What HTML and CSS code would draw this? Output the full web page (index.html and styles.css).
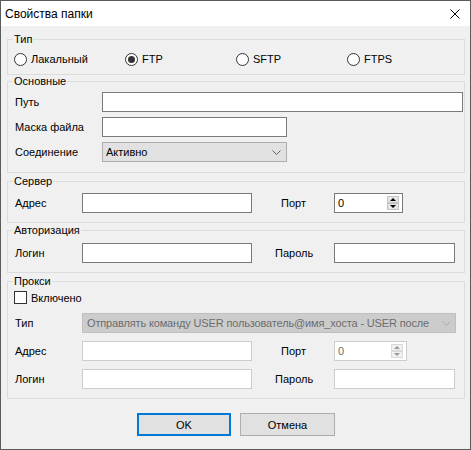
FILE: index.html
```html
<!DOCTYPE html>
<html lang="ru">
<head>
  <meta charset="UTF-8">
  <title>Свойства папки</title>
  <link rel="stylesheet" href="styles.css">
</head>
<body>

  <div class="window">
    <div class="titlebar">
      <span class="title">Свойства папки</span>
      <svg class="close" width="10" height="10" viewBox="0 0 10 10">
        <path d="M0.5 0.5 L9.5 9.5 M9.5 0.5 L0.5 9.5" stroke="#000" stroke-width="1" fill="none"/>
      </svg>
    </div>

    <div class="client">

      <fieldset class="group g-type">
        <legend>Тип</legend>
        <div class="radios">
          <label class="radio"><span class="dot"></span>Лакальный</label>
          <label class="radio"><span class="dot checked"></span>FTP</label>
          <label class="radio"><span class="dot"></span>SFTP</label>
          <label class="radio"><span class="dot"></span>FTPS</label>
        </div>
      </fieldset>

      <fieldset class="group g-main">
        <legend>Основные</legend>
        <div class="form-main">
          <span class="lbl">Путь</span>
          <div class="edit edit-path"></div>
          <span class="lbl">Маска файла</span>
          <div class="edit edit-mask"></div>
          <span class="lbl">Соединение</span>
          <div class="combo combo-mask">
            <span class="combo-text">Активно</span>
            <svg class="chev" width="9" height="5" viewBox="0 0 9 5"><path d="M0.5 0.5 L4.5 4.5 L8.5 0.5" stroke="#606060" fill="none"/></svg>
          </div>
        </div>
      </fieldset>

      <fieldset class="group g-server">
        <legend>Сервер</legend>
        <div class="form-pair">
          <span class="lbl">Адрес</span>
          <div class="edit edit-wide"></div>
          <span class="lbl lbl-port">Порт</span>
          <div class="spin">
            <span>0</span>
            <span class="spin-btns">
              <span class="spin-btn"><svg width="6" height="3" viewBox="0 0 6 3"><path d="M0 3 L3 0 L6 3 Z" fill="#000"/></svg></span>
              <span class="spin-btn"><svg width="6" height="3" viewBox="0 0 6 3"><path d="M0 0 L3 3 L6 0 Z" fill="#000"/></svg></span>
            </span>
          </div>
        </div>
      </fieldset>

      <fieldset class="group g-auth">
        <legend>Авторизация</legend>
        <div class="form-pair">
          <span class="lbl">Логин</span>
          <div class="edit edit-wide"></div>
          <span class="lbl lbl-pass">Пароль</span>
          <div class="edit edit-pass"></div>
        </div>
      </fieldset>

      <fieldset class="group g-proxy">
        <legend>Прокси</legend>
        <label class="check"><span class="box"></span>Включено</label>
        <div class="form-pair proxy-rows">
          <span class="lbl">Тип</span>
          <div class="combo combo-off span-all">
            <span class="combo-text">Отправлять команду USER пользователь@имя_хоста - USER после</span>
            <svg class="chev" width="9" height="5" viewBox="0 0 9 5"><path d="M0.5 0.5 L4.5 4.5 L8.5 0.5" stroke="#a8a8a8" fill="none"/></svg>
          </div>
          <span class="lbl">Адрес</span>
          <div class="edit edit-wide off"></div>
          <span class="lbl lbl-port">Порт</span>
          <div class="spin spin-off">
            <span>0</span>
            <span class="spin-btns">
              <span class="spin-btn"><svg width="6" height="3" viewBox="0 0 6 3"><path d="M0 3 L3 0 L6 3 Z" fill="#9a9a9a"/></svg></span>
              <span class="spin-btn"><svg width="6" height="3" viewBox="0 0 6 3"><path d="M0 0 L3 3 L6 0 Z" fill="#9a9a9a"/></svg></span>
            </span>
          </div>
          <span class="lbl">Логин</span>
          <div class="edit edit-wide off"></div>
          <span class="lbl lbl-pass">Пароль</span>
          <div class="edit edit-pass off"></div>
        </div>
      </fieldset>

      <div class="buttons">
        <button class="btn btn-ok">OK</button>
        <button class="btn btn-cancel">Отмена</button>
      </div>

    </div>
  </div>

</body>
</html>
```

FILE: styles.css
```css
* {
  box-sizing: border-box;
}
body {
  margin: 0;
  font-family: "Liberation Sans", Arial, sans-serif;
  font-size: 11px;
  color: #000;
  background: #fff;
}
.window {
  width: 471px;
  height: 450px;
  border: 1px solid #5b5b5b;
  background: #f0f0f0;
  display: flex;
  flex-direction: column;
}
.titlebar {
  height: 25px;
  flex: none;
  background: #fff;
  display: flex;
  align-items: center;
  justify-content: space-between;
  padding: 0 10px 0 4px;
}
.title {
  font-size: 12px;
}
.client {
  padding: 7px 5px 0 6px;
  display: flex;
  flex-direction: column;
}

/* group boxes */
.group {
  margin: 0;
  min-width: 0;
  border: 1px solid #dcdcdc;
  padding: 0 6px 0 7px;
}
.group legend {
  padding: 0 1px;
  margin-left: -2px;
  line-height: 13px;
}
.g-type {
  padding-top: 3px;
  padding-bottom: 5px;
}
.g-main {
  padding-top: 4px;
  padding-bottom: 10px;
}
.g-server {
  margin-top: 2px;
  padding-top: 5px;
  padding-bottom: 9px;
}
.g-auth {
  margin-top: 1px;
  padding-top: 6px;
  padding-bottom: 9px;
}
.g-proxy {
  margin-top: 2px;
  padding-top: 1px;
  padding-bottom: 9px;
}

/* radios */
.radios {
  display: flex;
  height: 20px;
  margin-left: -1px;
}
.radio {
  width: 112px;
  display: flex;
  align-items: center;
  gap: 4px;
}
.dot {
  width: 13px;
  height: 13px;
  border: 1px solid #333;
  border-radius: 50%;
  background: #fff;
  display: flex;
  align-items: center;
  justify-content: center;
}
.dot.checked::after {
  content: "";
  width: 7px;
  height: 7px;
  border-radius: 50%;
  background: #333;
}

/* checkbox */
.check {
  height: 17px;
  display: flex;
  align-items: center;
  gap: 4px;
  margin-left: -1px;
}
.box {
  width: 13px;
  height: 13px;
  border: 1px solid #333;
  background: #fff;
}

/* rows */
.form-main {
  display: grid;
  grid-template-columns: 87px 1fr;
  grid-auto-rows: 20px;
  row-gap: 5px;
  align-items: center;
}
.form-pair {
  display: grid;
  grid-template-columns: 67px 170px 82px auto;
  grid-auto-rows: 20px;
  row-gap: 8px;
  align-items: center;
  justify-items: start;
}
.proxy-rows {
  margin-top: 7px;
}
.span-all {
  grid-column: 2 / 5;
}
.lbl-port {
  padding-left: 29px;
}
.lbl-pass {
  padding-left: 23px;
}

/* edits */
.edit {
  height: 20px;
  background: #fff;
  border: 1px solid #7a7a7a;
}
.edit.off {
  border-color: #cccccc;
}
.edit-path {
  margin-right: -5px;
}
.edit-mask {
  width: 185px;
}
.edit-wide {
  width: 170px;
}
.edit-pass {
  width: 121px;
}

/* combos */
.combo {
  height: 20px;
  display: flex;
  align-items: center;
  justify-content: space-between;
  gap: 6px;
  padding: 0 5px 0 3px;
  background: #e1e1e1;
  border: 1px solid #adadad;
}
.combo-mask {
  width: 185px;
}
.combo-text {
  flex: 1;
  overflow: hidden;
  white-space: nowrap;
}
.combo-off {
  width: 374px;
  gap: 3px;
  padding: 0 4px 0 4px;
  background: #cccccc;
  border-color: #bfbfbf;
  color: #6d6d6d;
}
.combo-off .combo-text {
  letter-spacing: -0.15px;
}
.chev {
  flex: none;
}

/* spin */
.spin {
  width: 69px;
  height: 20px;
  display: flex;
  align-items: center;
  justify-content: space-between;
  padding: 0 3px;
  background: #fff;
  border: 1px solid #7a7a7a;
}
.spin-off {
  width: 73px;
  border-color: #cccccc;
  color: #6d6d6d;
}
.spin-btns {
  display: flex;
  flex-direction: column;
}
.spin-btn {
  width: 12px;
  height: 7px;
  display: flex;
  align-items: center;
  justify-content: center;
  background: #e6e6e6;
  border: 1px solid #c4c4c4;
}
.spin-off .spin-btn {
  background: #f0f0f0;
  border-color: #dadada;
}

/* buttons */
.buttons {
  display: flex;
  justify-content: center;
  gap: 9px;
  margin-top: 14px;
}
.btn {
  height: 23px;
  padding: 0;
  font-family: inherit;
  font-size: 11px;
  color: #000;
  background: #e1e1e1;
  border: 1px solid #adadad;
}
.btn-ok {
  width: 94px;
  border: 2px solid #0078d7;
}
.btn-cancel {
  width: 95px;
}
```
